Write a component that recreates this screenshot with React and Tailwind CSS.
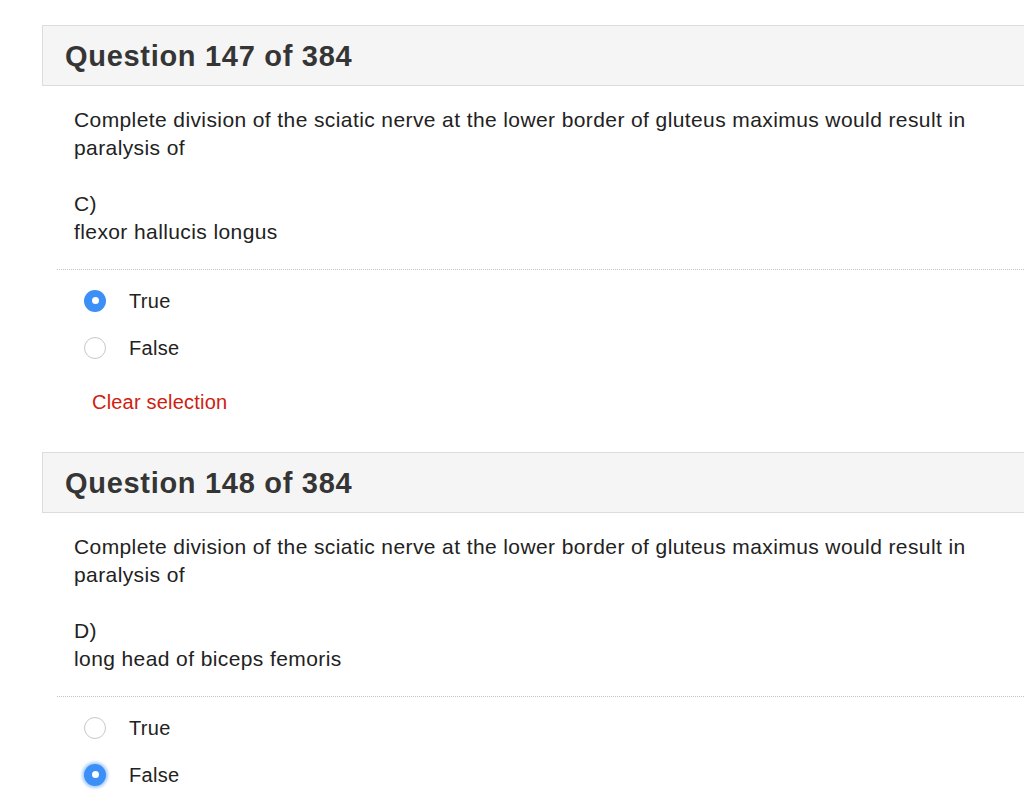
import React from "react";

function Radio({ checked, focus }) {
  if (checked) {
    return (
      <span
        className={
          "flex h-[22px] w-[22px] items-center justify-center rounded-full bg-[#3b8ff6] " +
          (focus ? "shadow-[0_0_3px_2px_rgba(59,143,246,0.45)]" : "")
        }
      >
        <span className="h-[7px] w-[7px] rounded-full bg-white" />
      </span>
    );
  }
  return <span className="block h-[22px] w-[22px] rounded-full border-[1.5px] border-[#c8c8c8] bg-white" />;
}

function Question({ num, letter, answer, selected, clear, focus }) {
  return (
    <div>
      <div className="flex h-[61px] w-[1000px] items-center border border-r-0 border-[#dcdcdc] bg-[#f5f5f5] pl-[22px] pt-[3px]">
        <h2 className="text-[29px] font-bold tracking-[0.7px] text-[#353535]">Question {num} of 384</h2>
      </div>
      <div className="pl-[32px] pt-[20px] text-[21px] leading-[28px] tracking-[0.4px] text-[#222]">
        <p>
          Complete division of the sciatic nerve at the lower border of gluteus maximus would result in
          <br />
          paralysis of
        </p>
        <p className="mt-[28px]">
          {letter})
          <br />
          {answer}
        </p>
      </div>
      <div className="ml-[15px] mt-[23px] border-t border-dotted border-[#c4c4c4]" />
      <div className="pl-[42px] pt-[7px] text-[20px] tracking-[0.3px] text-[#222]">
        {["True", "False"].map((opt) => (
          <div key={opt} className="flex h-[47px] items-center">
            <Radio checked={selected === opt} focus={focus && selected === opt} />
            <span className="ml-[23px]">{opt}</span>
          </div>
        ))}
      </div>
      {clear && (
        <div className="mb-[36px] mt-[17px] pl-[50px] text-[20px] leading-[28px] tracking-[0.2px] text-[#d0200f]">
          Clear selection
        </div>
      )}
    </div>
  );
}

export default function App() {
  return (
    <div
      className="h-[810px] w-[1024px] overflow-hidden bg-white pl-[42px] pt-[25px]"
      style={{ fontFamily: '"Liberation Sans", Arial, sans-serif' }}
    >
      <Question num={147} letter="C" answer="flexor hallucis longus" selected="True" clear />
      <Question num={148} letter="D" answer="long head of biceps femoris" selected="False" focus />
    </div>
  );
}
